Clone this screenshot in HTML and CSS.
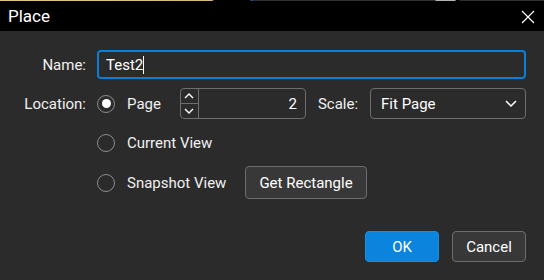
FILE: index.html
```html
<!DOCTYPE html>
<html lang="en">
  <head>
    <meta charset="UTF-8" />
    <title>Place</title>
    <link rel="stylesheet" href="styles.css">
  </head>
  <body>
    <div class="dialog">
      <div class="backdrop-strip"></div>
      <div class="titlebar">
        <span class="title">Place</span>
        <svg class="close-icon" width="14" height="14" viewBox="0 0 14 14">
          <path d="M1 1 L13 13 M13 1 L1 13" stroke="#fff" stroke-width="1.2" fill="none" />
        </svg>
      </div>

      <div class="content">
        <div class="form">
          <label class="field-label">Name:</label>
          <div class="text-input">Test2<span class="caret"></span></div>

          <label class="field-label row-location">Location:</label>
          <div class="location-row row-location">
            <div class="radio-option">
              <span class="radio checked"></span>
              <span>Page</span>
            </div>
            <div class="spinner">
              <div class="spin-buttons">
                <div class="spin-btn">
                  <svg width="10" height="6" viewBox="0 0 10 6"><path d="M1 5 L5 1 L9 5" stroke="#fff" stroke-width="1.4" fill="none" /></svg>
                </div>
                <div class="spin-btn">
                  <svg width="10" height="6" viewBox="0 0 10 6"><path d="M1 1 L5 5 L9 1" stroke="#fff" stroke-width="1.4" fill="none" /></svg>
                </div>
              </div>
              <span class="spin-value">2</span>
            </div>
            <span class="inline-label">Scale:</span>
            <div class="select">
              <span>Fit Page</span>
              <svg width="12" height="7" viewBox="0 0 12 7"><path d="M1 1 L6 6 L11 1" stroke="#fff" stroke-width="1.5" fill="none" /></svg>
            </div>
          </div>

          <span></span>
          <div class="radio-option single">
            <span class="radio"></span>
            <span>Current View</span>
          </div>

          <span></span>
          <div class="snapshot-row">
            <div class="radio-option">
              <span class="radio"></span>
              <span>Snapshot View</span>
            </div>
            <button class="button">Get Rectangle</button>
          </div>
        </div>

        <div class="footer">
          <button class="button primary">OK</button>
          <button class="button">Cancel</button>
        </div>
      </div>
    </div>
  </body>
</html>
```

FILE: styles.css
```css
/* place dialog */

* {
  margin: 0;
  padding: 0;
  box-sizing: border-box;
}

body {
  background-color: #2b2b2b;
  font-family: Roboto, "Liberation Sans", sans-serif;
  font-size: 15px;
  color: #ffffff;
}

.dialog {
  width: 544px;
  height: 280px;
  background-color: #2b2b2b;
}

/* 1px of whatever sits behind the window */
.backdrop-strip {
  height: 1px;
  background: linear-gradient(
    to right,
    #e3c48e 0px,
    #d8b984 212px,
    #000 214px,
    #000 250px,
    #1d6fc7 251px,
    #2e2e2e 253px,
    #2e2e2e 435px,
    #b4b4b4 436px,
    #b4b4b4 455px,
    #000 456px,
    #000 459px,
    #2e2e2e 460px
  );
}

.titlebar {
  height: 30px;
  background-color: #000;
  display: flex;
  align-items: center;
  justify-content: space-between;
  padding: 0 9px 0 8px;
}

.title {
  font-size: 17px;
  color: #fff;
}

.close-icon {
  margin-top: 1px;
}

.content {
  padding: 19px 18px 0 0;
}

.form {
  display: grid;
  grid-template-columns: 86px 1fr;
  column-gap: 11px;
  align-items: center;
}

.field-label {
  text-align: right;
  color: #f0f0f0;
}

.row-location {
  margin-top: 9px;
}

.text-input {
  height: 29px;
  border: 2px solid #0a7fd8;
  border-radius: 4px;
  padding: 0 7px;
  display: flex;
  align-items: center;
  background-color: #2b2b2b;
}

.caret {
  width: 1px;
  height: 18px;
  background-color: #fff;
}

.location-row {
  height: 31px;
  display: flex;
  align-items: center;
}

.radio-option {
  display: flex;
  align-items: center;
  gap: 12px;
  margin-right: 19px;
  color: #f0f0f0;
}

.radio-option.single {
  margin-top: 12px;
  height: 24px;
}

.radio {
  width: 18px;
  height: 18px;
  border: 1.5px solid #8c8c8c;
  border-radius: 50%;
  display: flex;
  align-items: center;
  justify-content: center;
}

.radio.checked::after {
  content: "";
  width: 9px;
  height: 9px;
  border-radius: 50%;
  background-color: #fff;
}

.spinner {
  width: 126px;
  height: 31px;
  border: 1px solid #6e6e6e;
  border-radius: 4px;
  display: flex;
  margin-right: 12px;
}

.spin-buttons {
  width: 18px;
  border-right: 1px solid #6e6e6e;
  display: flex;
  flex-direction: column;
}

.spin-btn {
  flex: 1;
  display: flex;
  align-items: center;
  justify-content: center;
}

.spin-btn + .spin-btn {
  border-top: 1px solid #6e6e6e;
}

.spin-value {
  flex: 1;
  text-align: right;
  padding-right: 8px;
  align-self: center;
}

.inline-label {
  margin-right: 12px;
  color: #f0f0f0;
}

.select {
  flex: 1;
  height: 31px;
  border: 1px solid #6e6e6e;
  border-radius: 4px;
  display: flex;
  align-items: center;
  justify-content: space-between;
  padding: 0 8px 0 10px;
}

.snapshot-row {
  margin-top: 11px;
  display: flex;
  align-items: center;
}

.button {
  font-family: Roboto, "Liberation Sans", sans-serif;
  font-size: 15px;
  color: #fff;
  background-color: #383838;
  border: 1px solid #6e6e6e;
  border-radius: 4px;
  height: 33px;
  padding: 0 13px;
}

.footer {
  margin-top: 32px;
  display: flex;
  justify-content: flex-end;
  gap: 13px;
}

.footer .button {
  width: 74px;
  height: 31px;
  padding: 0;
}

.button.primary {
  background-color: #0a84dc;
  border-color: #1a8ee6;
}
```
